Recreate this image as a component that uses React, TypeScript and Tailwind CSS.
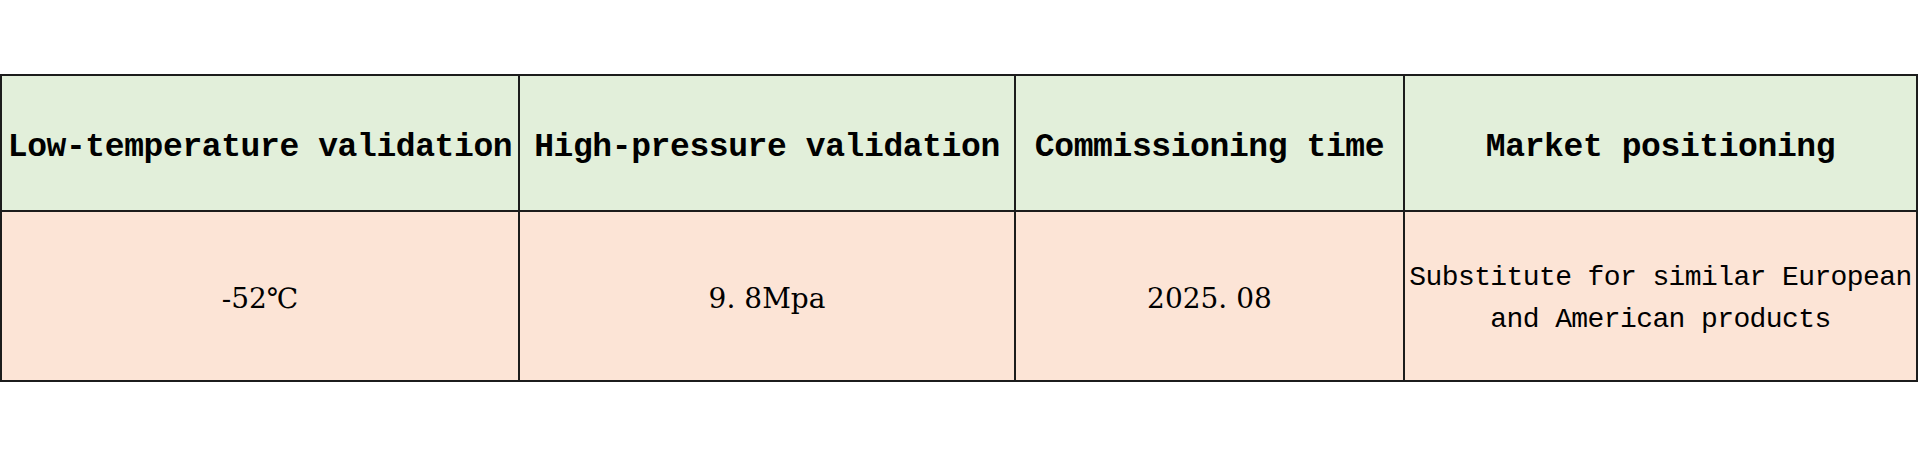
const MONO = "font-['Liberation_Mono','Noto_Sans_CJK_SC',monospace]";
const SERIF = "font-['DejaVu_Serif','Liberation_Serif','Noto_Sans_CJK_SC',serif]";

const headers = [
  "Low-temperature validation",
  "High-pressure validation",
  "Commissioning time",
  "Market positioning",
];

function Num({ left, right }: { left: string; right: string }) {
  // the source renders a wide period, so pad it out
  return (
    <span className={`${SERIF} text-[28px] leading-none text-black`}>
      {left}
      <span className="mr-[9px]">.</span>
      {right}
    </span>
  );
}

export default function App() {
  return (
    <div className="w-[1920px] h-[450px] bg-white pt-[74px]">
      <div className="grid w-[1918px] grid-cols-[518px_496px_389px_511px] border-2 border-[#1c1c1c]">
        {headers.map((h, i) => (
          <div
            key={h}
            className={`flex h-[136px] items-center justify-center border-b-2 border-[#1c1c1c] bg-[#e2efda] pt-[9px] ${
              i < 3 ? "border-r-2" : ""
            }`}
          >
            <span
              className={`${MONO} whitespace-nowrap text-[33px] font-bold leading-none tracking-[-0.4px] text-black`}
            >
              {h}
            </span>
          </div>
        ))}

        <div className="flex h-[168px] items-center justify-center border-r-2 border-[#1c1c1c] bg-[#fce4d6] pt-[6px]">
          <span className={`${SERIF} text-[28px] leading-none text-black`}>-52℃</span>
        </div>
        <div className="flex h-[168px] items-center justify-center border-r-2 border-[#1c1c1c] bg-[#fce4d6] pt-[6px]">
          <Num left="9" right="8Mpa" />
        </div>
        <div className="flex h-[168px] items-center justify-center border-r-2 border-[#1c1c1c] bg-[#fce4d6] pt-[6px]">
          <Num left="2025" right="08" />
        </div>
        <div className="flex h-[168px] items-center justify-center bg-[#fce4d6] pt-[6px]">
          <p
            className={`${MONO} text-center text-[28px] leading-[42px] tracking-[-0.6px] text-black`}
          >
            Substitute for similar European
            <br />
            and American products
          </p>
        </div>
      </div>
    </div>
  );
}
